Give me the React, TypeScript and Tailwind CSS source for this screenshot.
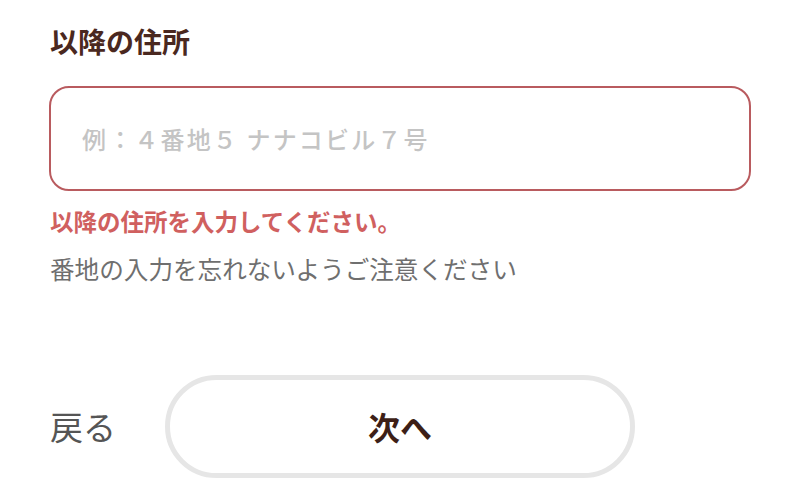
export default function App() {
  const font = { fontFamily: '"Noto Sans CJK JP", "Noto Sans", sans-serif' };
  return (
    <div className="w-[800px] h-[500px] bg-white overflow-hidden" style={font}>
      <div className="pl-[50px] pt-[27px] w-[751px] flex flex-col">
        <div className="text-[28px] leading-[28px] font-bold text-[#4a2820]">以降の住所</div>
        <div className="mt-[31px] h-[105px] w-[702px] -ml-[1px] border-2 border-[#b95b5f] rounded-[20px] flex items-center pl-[31px]">
          <span className="text-[24px] leading-[24px] font-medium text-[#c4c4c4] tracking-[0.09em]">例：４番地５ ナナコビル７号</span>
        </div>
        <div className="mt-[19px] text-[23.5px] leading-[23.5px] font-bold text-[#d0605f]">以降の住所を入力してください。</div>
        <div className="mt-[22px] text-[24.6px] leading-[25px] text-[#6f6f6f]">番地の入力を忘れないようご注意ください</div>
        <div className="mt-[94px] flex items-center">
          <span className="text-[33px] leading-[33px] text-[#555555]">戻る</span>
          <div className="ml-[49px] w-[470px] h-[103px] rounded-full border-[5px] border-[#e6e6e6] flex items-center justify-center">
            <span className="text-[32px] leading-[32px] font-bold text-[#3d1f17]">次へ</span>
          </div>
        </div>
      </div>
    </div>
  );
}
